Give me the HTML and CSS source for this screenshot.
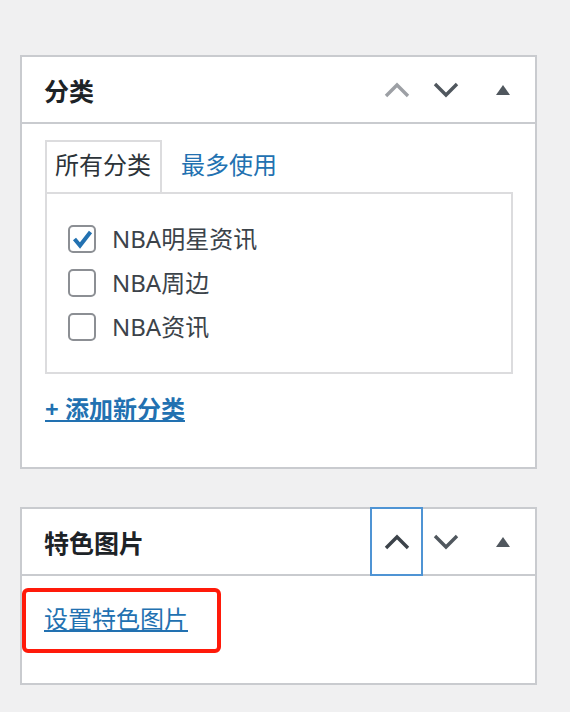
FILE: index.html
```html
<!DOCTYPE html>
<html lang="zh-CN">
<head>
<meta charset="utf-8">
<title>分类</title>
<link rel="stylesheet" href="styles.css">
</head>
<body>
<div class="page">
  <div class="postbox">
    <div class="postbox-header">
      <h2 class="hndle">分类</h2>
      <div class="handle-actions">
        <button class="handle-btn is-disabled" aria-label="上移">
          <svg class="chev" viewBox="0 0 26 16"><polyline points="2,14 13,3 24,14"/></svg>
        </button>
        <button class="handle-btn" aria-label="下移">
          <svg class="chev" viewBox="0 0 26 16"><polyline points="2,2 13,13 24,2"/></svg>
        </button>
        <button class="handle-btn toggle" aria-label="切换面板"><span class="tri"></span></button>
      </div>
    </div>
    <div class="inside">
      <ul class="tabs">
        <li class="tab active">所有分类</li>
        <li class="tab"><a href="#">最多使用</a></li>
      </ul>
      <div class="tab-panel">
        <label class="cat-row"><span class="cb checked"><svg viewBox="0 0 24 24"><polyline points="4.5,12 10,18.5 20.5,5"/></svg></span>NBA明星资讯</label>
        <label class="cat-row"><span class="cb"></span>NBA周边</label>
        <label class="cat-row"><span class="cb"></span>NBA资讯</label>
      </div>
      <a class="add-new" href="#">+ 添加新分类</a>
    </div>
  </div>

  <div class="postbox">
    <div class="postbox-header">
      <h2 class="hndle">特色图片</h2>
      <div class="handle-actions">
        <button class="handle-btn is-focused" aria-label="上移">
          <svg class="chev" viewBox="0 0 26 16"><polyline points="2,14 13,3 24,14"/></svg>
        </button>
        <button class="handle-btn" aria-label="下移">
          <svg class="chev" viewBox="0 0 26 16"><polyline points="2,2 13,13 24,2"/></svg>
        </button>
        <button class="handle-btn toggle" aria-label="切换面板"><span class="tri"></span></button>
      </div>
    </div>
    <div class="inside inside-thumb">
      <div class="highlight">
        <a class="set-thumb" href="#">设置特色图片</a>
      </div>
    </div>
  </div>
</div>
</body>
</html>
```

FILE: styles.css
```css
* { box-sizing: border-box; }

body {
  margin: 0;
  background: #f0f0f1;
  font-family: "Noto Sans", "Noto Sans CJK SC", sans-serif;
  font-size: 24px;
  line-height: 28px;
  color: #2c3338;
}

.page {
  padding: 55px 0 0 20px;
  width: 537px;
}

.postbox {
  background: #fff;
  border: 2px solid #c9cbcf;
  margin-bottom: 38px;
}

.postbox-header {
  display: flex;
  align-items: stretch;
  justify-content: space-between;
  height: 67px;
  border-bottom: 2px solid #c9cbcf;
}

.hndle {
  margin: 0;
  padding: 2px 0 0 22px;
  display: flex;
  align-items: center;
  font-size: 25px;
  font-weight: 700;
  color: #1d2327;
}

.handle-actions {
  display: flex;
  align-items: stretch;
}

.handle-btn {
  width: 49px;
  padding: 0;
  margin: 0;
  border: 0;
  background: transparent;
  display: flex;
  align-items: center;
  justify-content: center;
  color: #50575e;
}

.handle-btn.is-disabled { color: #9da0a5; }

.handle-btn.is-focused {
  box-shadow: 0 0 0 2px #4f94d4;
  position: relative;
  color: #3c434a;
}

.handle-btn.toggle { width: 65px; }

.chev {
  width: 26px;
  height: 16px;
  fill: none;
  stroke: currentColor;
  stroke-width: 3.4;
}

.tri {
  width: 0;
  height: 0;
  border-left: 7px solid transparent;
  border-right: 7px solid transparent;
  border-bottom: 10px solid #50575e;
}

.inside {
  padding: 16px 22px 44px 23px;
}

.tabs {
  list-style: none;
  margin: 0;
  padding: 0;
  display: flex;
}

.tab {
  padding: 9px 9px 13px 8px;
  border: 2px solid transparent;
  border-bottom: 0;
  margin-right: 9px;
}

.tab.active {
  border-color: #dcdcde;
  color: #2c3338;
}

.tab a {
  color: #2271b1;
  text-decoration: none;
}

.tab-panel {
  border: 2px solid #dcdcde;
  padding: 23px 0 23px 21px;
}

.cat-row {
  display: flex;
  align-items: center;
  gap: 16px;
  height: 44px;
  color: #3c434a;
}

.cb {
  width: 28px;
  height: 28px;
  border: 2px solid #8c8f94;
  border-radius: 5px;
  background: #fff;
  flex: none;
  display: flex;
}

.cb svg {
  width: 24px;
  height: 24px;
  fill: none;
  stroke: #2271b1;
  stroke-width: 4;
}

.add-new {
  display: inline-block;
  margin-top: 21px;
  color: #2271b1;
  font-weight: 700;
}

.inside-thumb {
  padding: 12px 0 30px 0;
}

.highlight {
  width: 199px;
  border: 4px solid #ff1a0a;
  border-radius: 6px;
  padding: 13px 0 16px 18px;
}

.set-thumb {
  color: #2271b1;
}
```
